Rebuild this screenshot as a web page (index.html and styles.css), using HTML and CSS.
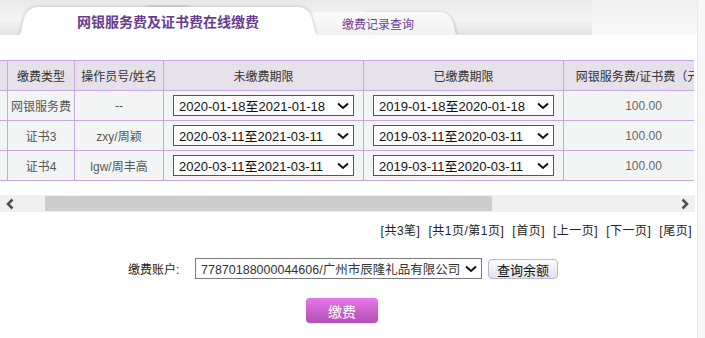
FILE: index.html
```html
<!DOCTYPE html>
<html lang="zh-CN">
	<head>
		<meta charset="UTF-8" />
		<title>网银服务费及证书费在线缴费</title>
		<link rel="stylesheet" href="styles.css">
	</head>
	<body>
		<div class="page">
			<div class="main">
				<div class="tabbar">
					<div class="tabs">
						<div class="tab tab-active">网银服务费及证书费在线缴费</div>
						<div class="tab tab-other">缴费记录查询</div>
					</div>
					<div class="tabbar-rest"></div>
				</div>

				<div class="grid-wrap">
					<table class="grid">
						<colgroup>
							<col style="width: 50px" />
							<col style="width: 67px" />
							<col style="width: 89px" />
							<col style="width: 200px" />
							<col style="width: 200px" />
							<col style="width: 160px" />
							<col style="width: 130px" />
							<col style="width: 134px" />
						</colgroup>
						<thead>
							<tr>
								<th>选择</th>
								<th>缴费类型</th>
								<th>操作员号/姓名</th>
								<th>未缴费期限</th>
								<th>已缴费期限</th>
								<th>网银服务费/证书费（元）</th>
								<th>应缴金额（元）</th>
								<th>备注</th>
							</tr>
						</thead>
						<tbody>
							<tr>
								<td><input type="checkbox" /></td>
								<td>网银服务费</td>
								<td>--</td>
								<td>
									<div class="picker"><span>2020-01-18至2021-01-18</span><svg width="12" height="8" viewBox="0 0 12 8"><path d="M1 1.5 L6 6 L11 1.5" fill="none" stroke="#111" stroke-width="2"/></svg></div>
								</td>
								<td>
									<div class="picker"><span>2019-01-18至2020-01-18</span><svg width="12" height="8" viewBox="0 0 12 8"><path d="M1 1.5 L6 6 L11 1.5" fill="none" stroke="#111" stroke-width="2"/></svg></div>
								</td>
								<td class="num">100.00</td>
								<td class="num">100.00</td>
								<td></td>
							</tr>
							<tr>
								<td><input type="checkbox" /></td>
								<td>证书3</td>
								<td>zxy/周颖</td>
								<td>
									<div class="picker"><span>2020-03-11至2021-03-11</span><svg width="12" height="8" viewBox="0 0 12 8"><path d="M1 1.5 L6 6 L11 1.5" fill="none" stroke="#111" stroke-width="2"/></svg></div>
								</td>
								<td>
									<div class="picker"><span>2019-03-11至2020-03-11</span><svg width="12" height="8" viewBox="0 0 12 8"><path d="M1 1.5 L6 6 L11 1.5" fill="none" stroke="#111" stroke-width="2"/></svg></div>
								</td>
								<td class="num">100.00</td>
								<td class="num">100.00</td>
								<td></td>
							</tr>
							<tr>
								<td><input type="checkbox" /></td>
								<td>证书4</td>
								<td>lgw/周丰高</td>
								<td>
									<div class="picker"><span>2020-03-11至2021-03-11</span><svg width="12" height="8" viewBox="0 0 12 8"><path d="M1 1.5 L6 6 L11 1.5" fill="none" stroke="#111" stroke-width="2"/></svg></div>
								</td>
								<td>
									<div class="picker"><span>2019-03-11至2020-03-11</span><svg width="12" height="8" viewBox="0 0 12 8"><path d="M1 1.5 L6 6 L11 1.5" fill="none" stroke="#111" stroke-width="2"/></svg></div>
								</td>
								<td class="num">100.00</td>
								<td class="num">100.00</td>
								<td></td>
							</tr>
						</tbody>
					</table>
				</div>

				<div class="hscroll">
					<svg class="hscroll-arrow" width="10" height="12" viewBox="0 0 10 12"><path d="M7.5 1.5 L3 6 L7.5 10.5" fill="none" stroke="#505050" stroke-width="2.6"/></svg>
					<div class="hscroll-track">
						<div class="hscroll-thumb"></div>
					</div>
					<svg class="hscroll-arrow" width="10" height="12" viewBox="0 0 10 12"><path d="M2.5 1.5 L7 6 L2.5 10.5" fill="none" stroke="#505050" stroke-width="2.6"/></svg>
				</div>

				<div class="pager">
					<span>[共3笔]</span>
					<span>[共1页/第1页]</span>
					<a href="#">[首页]</a>
					<a href="#">[上一页]</a>
					<a href="#">[下一页]</a>
					<a href="#">[尾页]</a>
				</div>

				<div class="account-row">
					<label>缴费账户:</label>
					<div class="picker picker-account"><span>77870188000044606/广州市辰隆礼品有限公司</span><svg width="12" height="8" viewBox="0 0 12 8"><path d="M1 1.5 L6 6 L11 1.5" fill="none" stroke="#111" stroke-width="2"/></svg></div>
					<button class="btn-query">查询余额</button>
				</div>

				<div class="pay-row">
					<button class="btn-pay">缴费</button>
				</div>
			</div>
			<div class="side"></div>
		</div>
	</body>
</html>
```

FILE: styles.css
```css
* {
	box-sizing: border-box;
}
body {
	margin: 0;
	font-family: "Liberation Sans", "Noto Sans CJK SC", sans-serif;
	font-size: 12px;
	color: #333;
	background-color: #fff;
}
.page {
	display: flex;
	width: 705px;
	height: 338px;
	overflow: hidden;
}
.main {
	width: 697px;
}
.side {
	flex: 1;
	background: #f7f7f7;
	border-left: 1px solid #e8e8e8;
}

/* tabs */
.tabbar {
	display: flex;
	height: 35px;
}
.tabs {
	width: 592px;
	display: flex;
	align-items: flex-end;
	padding-left: 20px;
	overflow: hidden;
	background: linear-gradient(#e9e9e9, #f4f4f4 55%, #e2e2e2);
}
.tabbar-rest {
	flex: 1;
	background: linear-gradient(#f0f0f0, #fafafa);
}
.tab {
	position: relative;
	display: flex;
	align-items: center;
	justify-content: center;
	color: #663d8f;
}
.tab::before,
.tab::after {
	content: "";
	position: absolute;
	top: 0;
	bottom: 0;
	width: 55%;
	z-index: -1;
}
.tab::before {
	left: 0;
	transform-origin: bottom left;
	transform: skewX(-14deg);
	border-top-left-radius: 10px;
}
.tab::after {
	right: 0;
	transform-origin: bottom right;
	transform: skewX(14deg);
	border-top-right-radius: 10px;
}
.tab-active {
	width: 296px;
	height: 28px;
	margin-right: -16px;
	z-index: 2;
	font-size: 14px;
	font-weight: bold;
}
.tab-active::before,
.tab-active::after {
	background: #fff;
}
.tab-active::before {
	box-shadow: -1px -1px 3px rgba(0, 0, 0, 0.15);
}
.tab-active::after {
	box-shadow: 1px -1px 3px rgba(0, 0, 0, 0.15);
}
.tab-other {
	width: 156px;
	height: 23px;
	z-index: 1;
	padding-bottom: 1px;
	font-size: 12px;
	color: #6b3f98;
}
.tab-other::before,
.tab-other::after {
	background: linear-gradient(#fbfbfb, #f1f1f1);
}
.tab-other::after {
	box-shadow: 1px 0 3px rgba(0, 0, 0, 0.18);
}

/* table */
.grid-wrap {
	width: 694px;
	margin-top: 25px;
	overflow: hidden;
}
.grid {
	border-collapse: collapse;
	table-layout: fixed;
	width: 1030px;
	margin-left: -43px;
}
.grid tr {
	height: 30px;
}
.grid th,
.grid td {
	border: 1px solid #c9a6e2;
	padding: 0;
	text-align: center;
	white-space: nowrap;
	overflow: hidden;
}
.grid th {
	background: #e5e0ea;
	font-weight: normal;
	color: #333;
}
.grid td {
	background: #f3f5f5;
	color: #555;
}
.grid td.num {
	color: #666;
}
.picker {
	display: flex;
	align-items: center;
	justify-content: space-between;
	width: 181px;
	height: 21px;
	margin: 0 auto;
	padding: 0 4px 0 5px;
	border: 1px solid #555;
	background: #fff;
	font-size: 13px;
	color: #111;
	white-space: nowrap;
}
.picker span {
	min-width: 0;
	overflow: hidden;
}
.picker svg {
	flex: none;
}

/* horizontal scroller */
.hscroll {
	display: flex;
	align-items: center;
	width: 695px;
	height: 17px;
	margin-top: 14px;
	background: #f0f0f0;
}
.hscroll-arrow {
	flex: none;
	margin: 0 5px;
}
.hscroll-track {
	flex: 1;
	height: 15px;
	padding-left: 25px;
}
.hscroll-thumb {
	width: 447px;
	height: 15px;
	background: #cdcdcd;
}

/* pager */
.pager {
	display: flex;
	justify-content: flex-end;
	gap: 8px;
	margin-top: 12px;
	padding-right: 5px;
	line-height: 14px;
	letter-spacing: 0.5px;
	color: #222;
}
.pager a {
	color: #222;
	text-decoration: none;
}

/* account */
.account-row {
	display: flex;
	align-items: center;
	margin-top: 20px;
	padding-left: 128px;
}
.account-row label {
	width: 67px;
	color: #222;
}
.picker-account {
	width: 287px;
	margin: 0;
	border-color: #7a7a7a;
	color: #333;
	font-size: 12.5px;
}
.btn-query {
	height: 20px;
	margin-left: 6px;
	padding: 0 8px;
	border: 1px solid #b9b7c6;
	border-radius: 4px;
	background: linear-gradient(#fdfdfe, #e2e0ea);
	font-family: inherit;
	font-size: 13px;
	color: #111;
}
.pay-row {
	margin-top: 19px;
	padding-left: 306px;
}
.btn-pay {
	width: 72px;
	height: 25px;
	border: none;
	border-radius: 4px;
	background: linear-gradient(#e676ea, #b24fb4);
	box-shadow: 0 0 2px rgba(0, 0, 0, 0.15);
	font-family: inherit;
	font-size: 14px;
	color: #fff;
	cursor: pointer;
}
```
